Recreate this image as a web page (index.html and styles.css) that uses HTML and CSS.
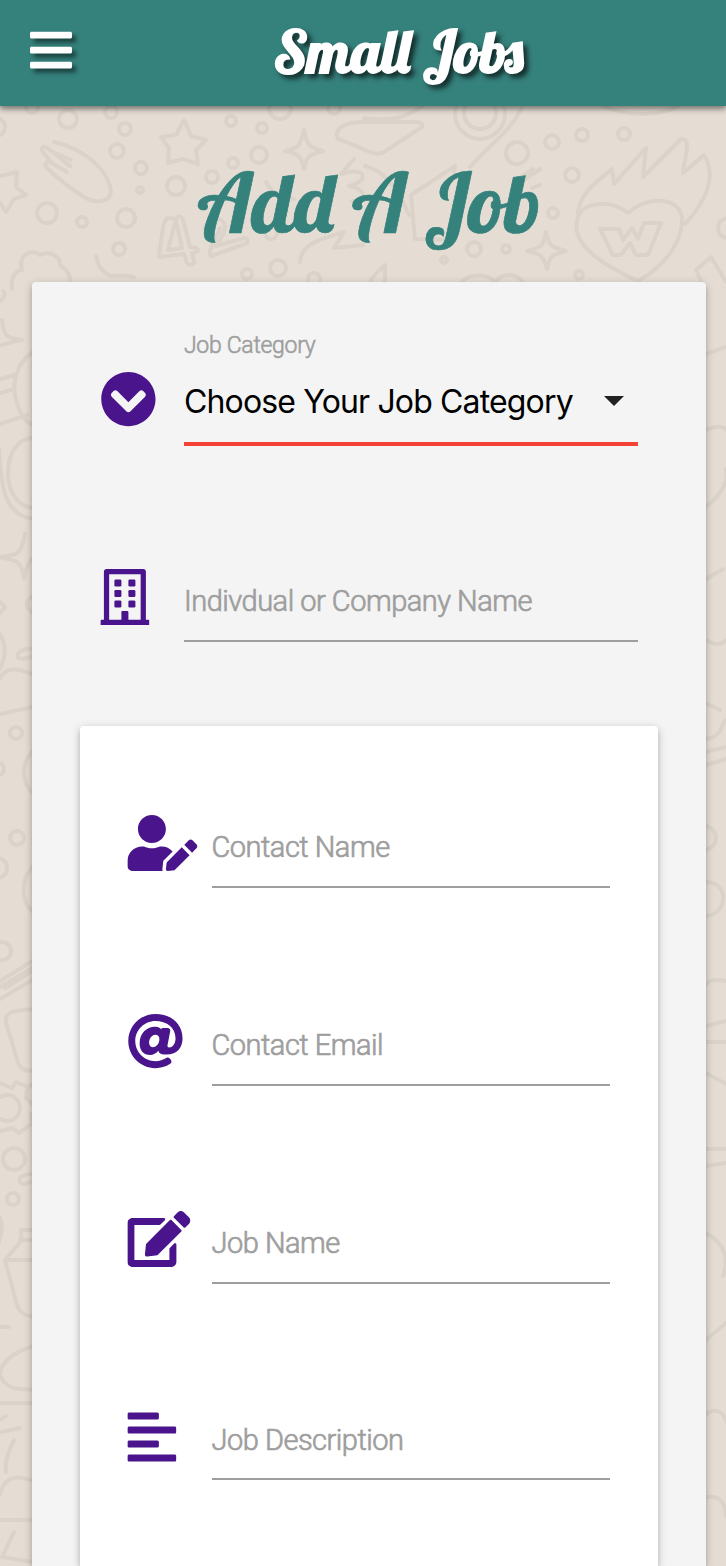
FILE: index.html
```html
<!DOCTYPE html>
<html lang="en">
<head>
<meta charset="utf-8">
<title>Small Jobs</title>
<link rel="stylesheet" href="styles.css">
</head>
<body>
<svg class="doodles" viewBox="0 0 726 1566" aria-hidden="true">
  <g>
    <circle cx="-4" cy="127" r="9"/><circle cx="32" cy="107" r="6"/><circle cx="68" cy="119" r="9"/><circle cx="111" cy="112" r="6"/><circle cx="125" cy="129" r="6"/><circle cx="117" cy="151" r="7"/><circle cx="141" cy="168" r="6"/><circle cx="140" cy="190" r="3"/><circle cx="47" cy="213" r="10"/><circle cx="82" cy="222" r="5"/><circle cx="126" cy="218" r="9"/><circle cx="176" cy="186" r="9"/><circle cx="212" cy="177" r="6"/><circle cx="233" cy="163" r="5"/><circle cx="259" cy="155" r="8"/><circle cx="231" cy="121" r="5"/><circle cx="262" cy="128" r="5"/><circle cx="280" cy="108" r="11"/><circle cx="334" cy="108" r="6"/><circle cx="119" cy="249" r="6"/><circle cx="247" cy="274" r="5"/><circle cx="278" cy="268" r="8"/><circle cx="314" cy="279" r="6"/><circle cx="271" cy="233" r="6"/>
    <path d="M184 120l7 16 15 4-10 10 2 14-15-5-15 4 1-15-8-11 15-2zM0 176l17-4-1 15 10 8-12 4-8 13-6-9"/>
    <path d="M54 142c26 6 49 22 56 44 5 17-15 19-29 9-12-8-24-17-34-27-5-6 2-8 6-4l14 8M53 164l-11-13c-2-6 4-5 8-1l20 16M51 151l20 9"/>
    <path d="M12 289c-2-14 6-19 10-19-4-16 10-22 18-15 12-5 21 3 20 10 14 9 10 18 7 24M96 256c3 14 8 16 14 20 10-1 18-1 24 1"/>
    <path d="M169 218c-5 0-6 6-10 39l25-3 3 9c2 3 8 2 7-2l-2-8c9-1 7-6-2-6l-7-27c-1-5-8-4-7 1l6 27-14 2 7-27c1-3-2-5-6-5M205 227c5-12 20-10 20 0 0 8-7 14-9 19l28-8c4-1 5 5 1 6l-34 12c-5-6 7-19 9-28"/>
    <path d="M304 130c3 13 3 17 19 21-15 4-16 5-19 18-3-13-5-15-19-18 14-3 15-5 19-21zM266 182c5 10 10 14 28 17M300 262c1-20 26-24 44-30l-10 16 29-3"/>
    <path d="M338 139c-5-12 10-17 25-17h52c6 0 9 3 7 5l-38 25c-10 6-24-6-46-13zM354 159l-13 15c28-9 27 9 8 12 19 3 18 17 3 15M423 106c-18 11-28 16-59 12"/>
    <circle cx="480" cy="114" r="25"/><circle cx="480" cy="113" r="16"/>
    <path d="M522 108c-13 25-33 37-52 59M411 195l44-29-2 14M411 195l4 44 40 1M365 166c20 4 35 27 44 49M521 177l12-8M532 188l8-3M518 184l22-15"/>
    <circle cx="517" cy="153" r="11"/><circle cx="552" cy="142" r="7"/><circle cx="582" cy="135" r="6"/><circle cx="624" cy="134" r="6"/><circle cx="572" cy="175" r="7"/><circle cx="553" cy="213" r="5"/><circle cx="474" cy="249" r="7"/><circle cx="506" cy="249" r="4"/><circle cx="579" cy="275" r="4"/><circle cx="444" cy="260" r="3"/><circle cx="728" cy="228" r="10"/>
    <path d="M546 232c3 14 5 15 20 19-15 4-16 5-19 18-4-13-5-15-20-18 16-4 16-5 19-19z"/>
    <path d="M638 281c-40-18-69-39-60-64 4-14 31-19 50-4 20-19 56-16 54 9-1 21-18 45-44 59zM578 214c1-21 21-34 34-45l2 15 32-36-3 29 38-38c12 0 3 18 2 34l21-18c12 20 4 44-19 69"/>
    <path d="M600 229h19l4 11 9-12 6 11 6-16h17l-13 32h-12l-6-12-9 12h-8zM603 106c25 11 58 10 75 0M696 270l15-13 15 25M696 270l8 17M459 285c12-16 32-9 36-3 10-12 25-8 30 4M369 284c4-9 10-13 16-19v20"/>
    <path d="M2 320c2 16 4 18 20 20-15 3-16 4-20 5M-2 303q10-8 5-12M38 350c-20 7-27 33-22 49 4 17 10 24 20 27M1 379l13-4M1 393l13-4M0 424l27-9M40 438c-28-3-32 24-32 35 0 22 12 35 30 36M-1 448c2 38 5 67 34 71M25 534c-4 20-6 22-28 23 21 3 24 4 27 21 3-11 4-16 10-21M0 602l5 5-5 6M0 634q10 17-1 36M36 596c-12 2-11 12-3 17M35 649c-17-2-23 10-12 10l12-3M0 679c5-13 18-11 35-4M0 714l33-7M34 750c-14 13-13 33 0 44"/>
    <circle cx="16" cy="733" r="6"/><circle cx="-2" cy="769" r="6"/><circle cx="2" cy="951" r="9"/><circle cx="17" cy="838" r="7"/><circle cx="-3" cy="868" r="10"/>
    <path d="M34 865c-14 14-14 36 0 48M0 981l34-21M0 987l34-20M0 999l34-20M5 988l29-18M34 1009c-23 2-29 2-28 14l11 36c2 11 10 13 18 11M0 1083l12 5 4-6 12 5-2 11 7 7M0 1131l12-3 7 5 14-10-2-9M34 1083q-10 6-7 13"/>
    <circle cx="7" cy="1108" r="13"/><circle cx="14" cy="1159" r="11"/><circle cx="13" cy="1199" r="6"/>
    <path d="M33 1174c-21 0-14 15-3 8M33 1230H21v11L5 1260l12 45c3 8 8 11 18 12M5 1260h28M20 1240h14M0 1217q4 13-1 25M0 1327h9M34 1346c-23 7-34 17-34 30 9 16 18 12 35 14M0 1403h33M0 1420l6-4M2 1432l18-4M14 1440q-10 20-8 32M30 1480q-24-9-30 14M0 1520h30M14 1532l-12 25 31 5"/>
    <path d="M706 354l20-7M706 430q26-11 23 16M706 507q24-20 20-38M706 579l17-10M706 640q13 8 20 0M706 703l14 7M706 739c18-3 14-15 20-19M706 752l20-5M706 765l20-6M704 826a12 12 0 0 1 0 24M706 882c24 0 22 33-1 34M706 984q5-6 20-3M706 1026l20-5M706 1042h20M706 1073l20 11M706 1149h20M706 1166l20-3M706 1233q27 15 17 43M706 1340l20-17M706 1414q15-10 22 11M706 1497q19-3 20 19"/>
  </g>
</svg>

<header class="topbar">
  <button class="menu" aria-label="Menu">
    <svg viewBox="0 0 448 512"><path d="M16 132h416c9 0 16-7 16-16V76c0-9-7-16-16-16H16C7 60 0 67 0 76v40c0 9 7 16 16 16zm0 160h416c9 0 16-7 16-16v-40c0-9-7-16-16-16H16c-9 0-16 7-16 16v40c0 9 7 16 16 16zm0 160h416c9 0 16-7 16-16v-40c0-9-7-16-16-16H16c-9 0-16 7-16 16v40c0 9 7 16 16 16z"/></svg>
  </button>
  <div class="brand">Small Jobs</div>
</header>

<main class="page">
  <h1 class="title">Add A Job</h1>
  <form class="panel">
    <div class="field field-select">
      <svg class="icon" viewBox="0 0 512 512"><path d="M504 256c0 137-111 248-248 248S8 393 8 256 119 8 256 8s248 111 248 248zM273 369.900l135.500-135.500c9.400-9.400 9.400-24.600 0-33.900l-17-17c-9.400-9.400-24.600-9.400-33.900 0L256 285.100 154.400 183.500c-9.400-9.400-24.600-9.400-33.900 0l-17 17c-9.400 9.400-9.400 24.600 0 33.900L239 369.900c9.400 9.400 24.600 9.400 34 0z"/></svg>
      <div class="control">
        <span class="caption">Job Category</span>
        <div class="select"><span class="value">Choose Your Job Category</span><svg class="caret" viewBox="0 0 20 10"><path d="M0 0h20L10 10z"/></svg></div>
      </div>
    </div>
    <div class="field">
      <svg class="icon" viewBox="0 0 448 512"><path fill-rule="evenodd" d="M0 512v-36c0-7 5-12 12-12h20V24C32 11 43 0 56 0h336c13 0 24 11 24 24v440h20c7 0 12 5 12 12v36zM80 464h112v-68c0-7 5-12 12-12h40c7 0 12 5 12 12v68h112V48H80z"/><rect x="128" y="96" width="64" height="64" rx="12"/><rect x="256" y="96" width="64" height="64" rx="12"/><rect x="128" y="192" width="64" height="64" rx="12"/><rect x="256" y="192" width="64" height="64" rx="12"/><rect x="128" y="288" width="64" height="64" rx="12"/><rect x="256" y="288" width="64" height="64" rx="12"/></svg>
      <div class="control"><span class="label">Indivdual or Company Name</span></div>
    </div>

    <section class="card">
      <div class="field">
        <svg class="icon" viewBox="0 0 640 512"><path d="M224 256c70.700 0 128-57.300 128-128S294.700 0 224 0 96 57.300 96 128s57.300 128 128 128zm89.600 32h-16.700c-22.200 10.200-46.900 16-72.900 16s-50.600-5.800-72.900-16h-16.700C60.200 288 0 348.200 0 422.400V464c0 26.500 21.500 48 48 48h274.900c-2.400-6.800-3.400-14-2.600-21.300l6.800-60.900 1.200-11.100 7.900-7.900 77.300-77.300c-24.500-27.700-60-45.500-99.900-45.500zm45.300 145.300l-6.800 61c-1.100 10.200 7.500 18.800 17.600 17.600l60.900-6.800 137.900-137.900-71.700-71.700-137.900 137.800zM633 268.900L595.100 231c-9.300-9.300-24.500-9.300-33.800 0l-37.800 37.800-4.100 4.100 71.800 71.700 41.800-41.800c9.300-9.400 9.300-24.500 0-33.900z"/></svg>
        <div class="control"><span class="label">Contact Name</span></div>
      </div>
      <div class="field">
        <svg class="icon" viewBox="0 0 512 512"><path d="M256 8C118.941 8 8 118.919 8 256c0 137.059 110.919 248 248 248 48.154 0 95.342-14.140 135.408-40.223 12.005-7.815 14.625-24.288 5.552-35.372l-10.177-12.433c-7.671-9.371-21.179-11.667-31.373-5.129C325.920 429.757 291.314 440 256 440c-101.458 0-184-82.542-184-184S154.542 72 256 72c100.139 0 184 57.619 184 160 0 38.786-21.093 79.742-58.170 83.693-17.349-.454-16.910-12.857-13.476-30.024l23.433-121.110C394.653 149.750 383.308 136 368.225 136h-44.981a13.518 13.518 0 0 0-13.432 11.993l-.010.092c-14.697-17.901-40.448-21.775-59.971-21.775-74.580 0-137.831 62.234-137.831 151.460 0 65.303 36.785 105.870 96 105.870 26.984 0 57.369-15.637 74.991-38.333 9.522 34.104 40.613 34.104 70.710 34.104C462.609 379.410 504 307.798 504 232 504 95.653 394.023 8 256 8zm-21.680 304.430c-22.249 0-36.070-15.623-36.070-40.771 0-44.993 30.779-72.729 58.630-72.729 22.292 0 35.601 15.241 35.601 40.770 0 45.061-33.875 72.730-58.161 72.730z"/></svg>
        <div class="control"><span class="label">Contact Email</span></div>
      </div>
      <div class="field">
        <svg class="icon" viewBox="0 0 576 512"><path d="M402.600 83.200l90.200 90.200c3.800 3.800 3.800 10 0 13.800L274.400 405.600l-92.800 10.300c-12.400 1.400-22.900-9.100-21.500-21.500l10.300-92.800L388.800 83.200c3.800-3.800 10-3.800 13.800 0zm162-22.900l-48.800-48.800c-15.200-15.200-39.900-15.200-55.200 0l-35.400 35.400c-3.800 3.800-3.800 10 0 13.800l90.200 90.200c3.800 3.800 10 3.800 13.800 0l35.400-35.400c15.200-15.300 15.200-40 0-55.200zM384 346.200V448H64V128h229.800c3.200 0 6.200-1.300 8.500-3.500l40-40c7.600-7.600 2.200-20.500-8.500-20.500H48C21.500 64 0 85.500 0 112v352c0 26.500 21.500 48 48 48h352c26.500 0 48-21.500 48-48V306.200c0-10.700-12.900-16-20.500-8.500l-40 40c-2.200 2.300-3.500 5.300-3.500 8.500z"/></svg>
        <div class="control"><span class="label">Job Name</span></div>
      </div>
      <div class="field field-area">
        <svg class="icon" viewBox="0 0 448 512"><rect y="32" width="288" height="64" rx="14"/><rect y="160" width="448" height="64" rx="14"/><rect y="288" width="288" height="64" rx="14"/><rect y="416" width="448" height="64" rx="14"/></svg>
        <div class="control"><span class="label">Job Description</span></div>
      </div>
    </section>
  </form>
</main>
</body>
</html>
```
FILE: styles.css
```css
* { box-sizing: border-box; }

body {
  position: relative;
  height: 1566px;
  margin: 0;
  overflow: hidden;
  background: #e5ddd4;
  font-family: Roboto, "Liberation Sans", sans-serif;
}

.doodles {
  position: absolute;
  inset: 0;
  z-index: -1;
  width: 726px;
  height: 1566px;
}

.doodles g {
  fill: none;
  stroke: #dbd3ca;
  stroke-width: 4;
  stroke-linecap: round;
  stroke-linejoin: round;
}

.topbar {
  display: grid;
  grid-template-columns: 72px 1fr;
  align-items: center;
  height: 106px;
  background: #35817c;
  box-shadow: 0 3px 5px rgba(0, 0, 0, .38), 0 1px 9px rgba(0, 0, 0, .18);
}

.menu {
  height: 48px;
  margin: 0 0 6px;
  padding: 0 0 0 30px;
  border: 0;
  background: none;
}

.menu svg {
  display: block;
  width: 42px;
  height: 48px;
  fill: #fff;
  filter: drop-shadow(4px 4px 2px rgba(0, 0, 0, .5));
}

.brand, .title {
  font-family: Lobster, "Liberation Serif", serif;
  text-align: center;
  white-space: nowrap;
}

.brand {
  padding: 0 1px 5px 0;
  color: #fff;
  font-size: 58.8px;
  font-weight: 700;
  line-height: 74px;
  text-shadow: 4px 4px 5px rgba(0, 0, 0, .65);
}

.title {
  height: 176px;
  margin: 0;
  padding: 45px 0 0 12px;
  color: #35817c;
  font-size: 82px;
  font-weight: 400;
  line-height: 104px;
  -webkit-text-stroke: .7px #35817c;
}

.panel {
  height: 1284px;
  margin: 0 20px 0 32px;
  padding: 48px 48px 0;
  border-radius: 4px 4px 0 0;
  background: #f4f4f4;
  box-shadow: 0 4px 5px rgba(0, 0, 0, .16), 0 2px 10px rgba(0, 0, 0, .18);
}

.field {
  display: grid;
  grid-template-columns: 84px 1fr;
  height: 116px;
  margin: 0 20px 80px;
}

.icon {
  width: auto;
  height: 56px;
  margin-top: 43px;
  fill: #4a148c;
  transform: translateX(.4px);
}

.control {
  display: flex;
  flex-direction: column;
  justify-content: flex-end;
  border-bottom: 2px solid #9e9e9e;
}

.label {
  height: 57px;
  color: #9e9e9e;
  font-size: 29px;
  font-weight: 300;
  line-height: 36px;
  letter-spacing: -.5px;
  white-space: nowrap;
  -webkit-text-stroke: .7px #9e9e9e;
}

.card .label { margin-left: -.5px; }

.field-select .icon { margin-top: 41px; }
.field-select .control { justify-content: flex-start; border-bottom: 4px solid #f44336; }

.caption {
  height: 42px;
  color: #9e9e9e;
  font-size: 23px;
  font-weight: 300;
  line-height: 31px;
  letter-spacing: -.3px;
  -webkit-text-stroke: .6px #9e9e9e;
}

.select {
  display: flex;
  align-items: center;
  justify-content: space-between;
  height: 58px;
  padding-right: 14px;
}

.value {
  color: #000;
  font-family: Inter, sans-serif;
  font-size: 32px;
  letter-spacing: -.85px;
  white-space: nowrap;
}

.caret { width: 20px; height: 10px; fill: #212121; }

.card {
  height: 840px;
  margin-top: 84px;
  padding: 46px 48px 0 47px;
  border-radius: 4px 4px 0 0;
  background: #fff;
  box-shadow: 0 4px 5px rgba(0, 0, 0, .12), 0 2px 10px rgba(0, 0, 0, .2);
}

.card .field {
  grid-template-columns: 85px 1fr;
  margin: 0 0 82px;
}

.card .field-area {
  height: 114px;
  margin-bottom: 0;
}

.field-area .label { height: 56px; }
```
